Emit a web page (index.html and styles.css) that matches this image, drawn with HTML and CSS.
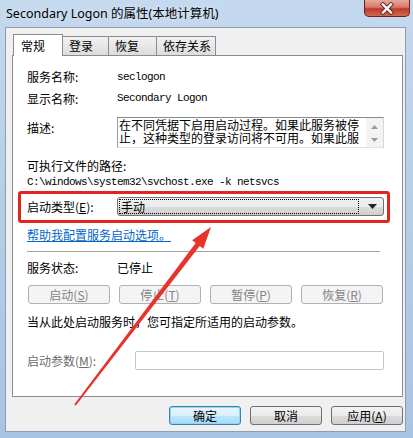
FILE: index.html
```html
<!DOCTYPE html>
<html lang="zh-CN">
<head>
  <meta charset="UTF-8">
  <title>Secondary Logon 的属性(本地计算机)</title>
  <link rel="stylesheet" href="styles.css">
</head>
<body>
  <div class="window">
    <div class="titlebar">
      <span class="title">Secondary Logon 的属性(本地计算机)</span>
      <span class="close">
        <svg width="16" height="13" viewBox="0 0 16 13">
          <path d="M4 2.5 L12 10.5 M12 2.5 L4 10.5" stroke="#5a2a24" stroke-width="4.2" stroke-linecap="square"/>
          <path d="M4 2.5 L12 10.5 M12 2.5 L4 10.5" stroke="#fff" stroke-width="2.4" stroke-linecap="square"/>
        </svg>
      </span>
    </div>

    <div class="dialog">
      <div class="tabs">
        <div class="tab active">常规</div>
        <div class="tab w46">登录</div>
        <div class="tab w48">恢复</div>
        <div class="tab w59">依存关系</div>
      </div>

      <div class="panel">
        <div class="row r1"><div class="row-label">服务名称:</div><div class="mono">seclogon</div></div>
        <div class="row r2"><div class="row-label">显示名称:</div><div class="mono">Secondary Logon</div></div>
        <div class="row desc-row">
          <div class="row-label top">描述:</div>
          <div class="desc">
            <div class="desc-text">在不同凭据下启用启动过程。如果此服务被停<br>止，这种类型的登录访问将不可用。如果此服</div>
            <div class="scroll">
              <svg width="7" height="4" viewBox="0 0 7 4"><path d="M0 4 L3.5 0 L7 4 Z" fill="#9a9a9a"/></svg>
              <svg width="7" height="4" viewBox="0 0 7 4"><path d="M0 0 L3.5 4 L7 0 Z" fill="#9a9a9a"/></svg>
            </div>
          </div>
        </div>
        <div class="line path-label">可执行文件的路径:</div>
        <div class="line mono path">C:\windows\system32\svchost.exe -k netsvcs</div>

        <div class="mark">
          <div class="row-label">启动类型(<u>E</u>):</div>
          <div class="select">
            <span class="focus">手动</span>
            <svg width="9" height="5" viewBox="0 0 9 5"><path d="M0 0 L9 0 L4.5 5 Z" fill="#222"/></svg>
          </div>
        </div>

        <div class="line help"><a href="#">帮助我配置服务启动选项。</a></div>
        <div class="divider"></div>

        <div class="line status"><span class="row-label">服务状态:</span><span>已停止</span></div>

        <div class="actions">
          <button class="btn off">启动(<u>S</u>)</button>
          <button class="btn off">停止(<u>T</u>)</button>
          <button class="btn off">暂停(<u>P</u>)</button>
          <button class="btn off">恢复(<u>R</u>)</button>
        </div>

        <div class="line hint">当从此处启动服务时，您可指定所适用的启动参数。</div>

        <div class="params">
          <div class="params-label">启动参数(<u>M</u>):</div>
          <div class="params-input"></div>
        </div>
      </div>

      <div class="footer">
        <button class="btn ok">确定</button>
        <button class="btn">取消</button>
        <button class="btn">应用(<u>A</u>)</button>
      </div>
    </div>

    <svg class="arrow" width="413" height="438" viewBox="0 0 413 438">
      <polygon points="74.2,404.4 195.7,243 192.1,240.3 211,227 203.3,248.7 199.7,246 75.8,405.6" fill="#e8332c"/>
    </svg>
  </div>
</body>
</html>
```

FILE: styles.css
```css
body {
  margin: 0;
  width: 413px;
  height: 438px;
  overflow: hidden;
  font-family: "Noto Sans CJK SC", "Noto Sans", sans-serif;
  font-size: 12px;
  color: #000;
}
.window {
  position: relative;
  width: 413px;
  height: 438px;
  box-sizing: border-box;
  padding: 0 7px 6px 5px;
  background: linear-gradient(to bottom, #c4d8ee 0%, #b9cfe8 40%, #a9c3e2 100%);
}
.titlebar { display: flex; align-items: flex-start; height: 27px; padding-left: 1px; }
.title {
  font-family: "Noto Sans", "Noto Sans CJK SC", sans-serif;
  font-size: 12.5px;
  line-height: 18px;
  padding-top: 5px;
  color: #000;
  text-shadow: 0 0 6px #e8f1fa;
}
.close {
  margin-left: auto;
  margin-right: -4px;
  width: 46px;
  height: 17px;
  box-sizing: border-box;
  border: 1px solid #6b2119;
  border-top: none;
  border-radius: 0 0 5px 5px;
  background: linear-gradient(to bottom, #e6a99c 0%, #d47a68 45%, #c0392a 55%, #d06a4f 100%);
  display: flex;
  align-items: center;
  justify-content: center;
}
.dialog {
  height: 405px;
  box-sizing: border-box;
  border: 1px solid #8e9cb0;
  background: #f0f0f0;
  padding: 6px 2px 0 6px;
}
.tabs { display: flex; align-items: flex-end; height: 22px; padding-left: 1px; }
.tab {
  height: 19px;
  margin-bottom: 1px;
  margin-left: -1px;
  box-sizing: border-box;
  border: 1px solid #898c95;
  border-bottom: none;
  background: linear-gradient(to bottom, #f2f2f2, #dcdcdc);
  line-height: 18px;
  padding-left: 6px;
}
.tab.active {
  width: 50px;
  height: 22px;
  margin-bottom: 0;
  margin-left: 0;
  background: #fff;
  position: relative;
  z-index: 1;
  padding-left: 7px;
  line-height: 21px;
}
.w46 { width: 47px; }
.w48 { width: 49px; }
.w59 { width: 60px; }
.panel {
  width: 391px;
  height: 342px;
  box-sizing: border-box;
  margin-top: -1px;
  border: 1px solid #898c95;
  background: #fff;
  padding-left: 14px;
}
.row { display: flex; align-items: center; }
.row-label { width: 90px; flex-shrink: 0; display: inline-block; }
.row-label.top { align-self: flex-start; margin-top: 4px; line-height: 14px; }
.r1 { margin-top: 10px; height: 21px; }
.r2 { height: 22px; }
.mono {
  font-family: "Liberation Mono", monospace;
  font-size: 11px;
  letter-spacing: -0.6px;
}
.desc-row { margin-top: 8px; align-items: flex-start; }
.desc {
  width: 267px;
  height: 31px;
  box-sizing: border-box;
  border: 1px solid;
  border-color: #8a8a8a #d8d8d8 #e2e2e2 #9c9c9c;
  display: flex;
  overflow: hidden;
}
.desc-text { flex: 1; line-height: 13px; padding-left: 1px; }
.scroll {
  width: 17px;
  background: #f3f3f3;
  display: flex;
  flex-direction: column;
  justify-content: space-between;
  align-items: center;
  padding: 7px 0 5px;
  box-sizing: border-box;
}
.line { line-height: 14px; }
.path-label { margin-top: 11px; }
.path { margin-top: 2px; }
.mark {
  margin-top: 2px;
  margin-left: -9px;
  width: 372px;
  box-sizing: border-box;
  border: 3px solid #e3251f;
  border-radius: 3px;
  padding: 3px 3px 4px 6px;
  display: flex;
  align-items: center;
}
.select {
  width: 267px;
  height: 19px;
  box-sizing: border-box;
  border: 1px solid #707070;
  border-radius: 3px;
  background: linear-gradient(to bottom, #f2f2f2 0%, #ebebeb 50%, #dddddd 51%, #cfcfcf 100%);
  display: flex;
  align-items: center;
  padding: 1px 6px 1px 1px;
}
.focus {
  flex: 1;
  height: 15px;
  box-sizing: border-box;
  border: 1px dotted #000;
  line-height: 13px;
  padding-left: 1px;
  margin-right: 9px;
}
.help { margin-top: 5px; }
.help a { color: #0066cc; text-decoration: underline; }
.divider { margin-top: 9px; width: 353px; height: 1px; background: #a0a0a0; }
.status { margin-top: 9px; }
.actions { display: flex; gap: 9px; margin-top: 10px; padding-left: 1px; }
.btn {
  height: 19px;
  width: 72px;
  box-sizing: border-box;
  padding: 0;
  border: 1px solid #707070;
  border-radius: 3px;
  background: linear-gradient(to bottom, #f2f2f2 0%, #ebebeb 50%, #dddddd 51%, #cfcfcf 100%);
  font-family: "Noto Sans CJK SC", "Noto Sans", sans-serif;
  font-size: 12px;
  line-height: 16px;
  color: #000;
}
.btn.off {
  width: 82px;
  border-color: #adb2b5;
  background: #f4f4f4;
  color: #838383;
}
.btn.ok {
  border-color: #3c7fb1;
  background: linear-gradient(to bottom, #eaf6fd 0%, #d9f0fc 50%, #bee6fd 51%, #a7d9f5 100%);
  box-shadow: inset 0 0 0 1px #8fd6f8;
}
.hint { margin-top: 11px; }
.params { display: flex; align-items: center; margin-top: 22px; }
.params-label { width: 108px; color: #6d6d6d; }
.params-input {
  width: 249px;
  height: 19px;
  box-sizing: border-box;
  border: 1px solid #c4c7ca;
  border-radius: 2px;
  background: #fff;
}
.footer { display: flex; justify-content: flex-end; gap: 9px; margin-top: 9px; }
.arrow { position: absolute; left: 0; top: 0; pointer-events: none; }
```
